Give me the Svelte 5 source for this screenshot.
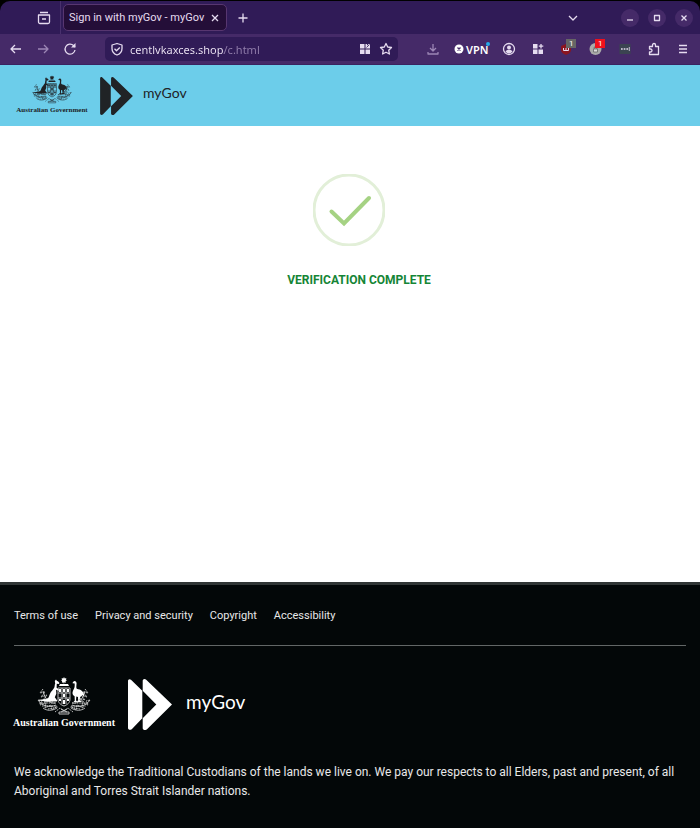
<script lang="ts">
  let address = 'centlvkaxces.shop/c.html';

  let links = ['Terms of use', 'Privacy and security', 'Copyright', 'Accessibility'];
</script>

{#snippet crest()}
  <svg class="crest" viewBox="0 0 54 38" aria-hidden="true">
    <g fill="none" stroke="currentColor" stroke-width="0.9" opacity="0.8">
      <path d="M19 26C12 27 8 22 6 14M19 28C12 31 5 29 1 23M20 31C15 34 10 34 6 31M35 26C42 27 46 22 48 14M35 28C42 31 49 29 53 23M34 31C39 34 44 34 48 31" />
      <path d="M6 12l-3 4 5-1-4 5 6-2-4 5 7-2-6 4 9-1M48 12l3 4-5-1 4 5-6-2 4 5-7-2 6 4-9-1" stroke-dasharray="2 0.7" />
      <path d="M1 23l4 1-2 4 6-2-1 5 6-3 1 5 5-4M53 23l-4 1 2 4-6-2 1 5-6-3-1 5-5-4" stroke-dasharray="2 0.7" />
      <path d="M2 26h17M35 26h17M5 29h15M34 29h15M11 32l10-2M43 32l-10-2M18 35l5-4 4 3 4-3 5 4" stroke-dasharray="1.6 0.8" />
      <path d="M21 11h12v11c0 4-3 6-6 7-3-1-6-3-6-7zM21 16h12M21 21h12M25 11v16M29 11v16" />
      <path d="M22 35h10v2H22zM24 32l6 3M30 32l-6 3" />
    </g>
    <path fill="currentColor" d="M27 0l.8 1.400 1.600-.5-.5 1.600L30 3.300l-1.400.8.3 1.700-1.500-.5L27 7l-.7-1.700-1.400.5.2-1.700L24 3.300l1.100-.8-.5-1.600 1.600.5z" />
    <path fill="currentColor" d="M22 9h10l-1-2h-8zM22 12h2v3h-2zM26 12h2v3h-2zM30 12h2v3h-2zM26 17h2v3h-2zM22 22h2v2h-2zM30 22h2v2h-2zM26 23h2v4h-2z" />
    <path fill="currentColor" d="M19 2.500l1 1.500 1 .3 1.500 1.700-.7 1-2-.2-.2 4 2.400 2-.4 1-2.500-1 .2 4-1.500 3.500 2.500 3.400-.6.8H9l-7-1v-.8l8-.7c2-1 2-3 3-5.200 1-2.400 3-3.900 4.200-6 .7-1.300.3-3 1-4.400L17.800 4z" />
    <path fill="currentColor" d="M36 5l1.300-1 1.600.6.7 1.500-.3 3.900c0 1.500.6 2.100 2 2.300 3.600.5 5.700 3 6 7l-1.800-1.200-2.200 1.800-.8 3.100 2 2H40l1.200-1.600-.2-3.400-1.700-.4-.3 3.800 1.500 1.600h-4l1.300-1.600-.2-4.100c-2.200-1.300-2.500-3.400-1.700-5.400.6-1.500 2-3 1.800-5.300L37.700 6.500l-2.200-.3z" />
  </svg>
{/snippet}

{#snippet brand()}
  <div class="government">
    {@render crest()}
    <span>Australian Government</span>
  </div>
  <svg class="arrows" viewBox="0 0 44 51" aria-hidden="true">
    <path fill="currentColor" d="M0 2C0 .3 1.600-.5 3 .8L14.300 11.800V39.200L4 49.900C2.500 51.500 0 51 0 49z" />
    <path fill="currentColor" d="M14.700 2c0-1.800 2-2.600 3.500-1.200L44 25.500 19 50.200c-1.600 1.500-4.300 1-4.300-1.200V39.200L28.300 25.500 14.700 11.800z" />
  </svg>
  <span class="name">myGov</span>
{/snippet}

<div class="window">
  <div class="tabs">
    <button class="recent" aria-label="Recent browsing">
      <svg viewBox="0 0 16 16"><path d="M4 2.500h8M2.500 5h11v7a1.500 1.500 0 0 1-1.500 1.500H4A1.500 1.500 0 0 1 2.500 12zM6 9h4" /></svg>
    </button>
    <div class="tab">
      <span>Sign in with myGov - myGov</span>
      <button class="close" aria-label="Close tab">
        <svg viewBox="0 0 8 8"><path d="M1 1l6 6M7 1L1 7" /></svg>
      </button>
    </div>
    <button class="icon" aria-label="New tab">
      <svg viewBox="0 0 16 16"><path d="M8 3.500v9M3.500 8h9" /></svg>
    </button>
    <button class="icon list" aria-label="List all tabs">
      <svg viewBox="0 0 16 16"><path d="M4 6l4 4 4-4" /></svg>
    </button>
    <div class="controls">
      <button aria-label="Minimise"><svg viewBox="0 0 8 8"><path d="M1 6h6" /></svg></button>
      <button aria-label="Maximise"><svg viewBox="0 0 8 8"><path d="M1.500 1.500h5v5h-5z" /></svg></button>
      <button aria-label="Close"><svg viewBox="0 0 8 8"><path d="M1.500 1.500l5 5M6.500 1.500l-5 5" /></svg></button>
    </div>
  </div>

  <div class="toolbar">
    <div class="nav">
      <button class="icon" aria-label="Back"><svg viewBox="0 0 16 16"><path d="M13 8H3M7 4L3 8l4 4" /></svg></button>
      <button class="icon dim" aria-label="Forward"><svg viewBox="0 0 16 16"><path d="M3 8h10M9 4l4 4-4 4" /></svg></button>
      <button class="icon" aria-label="Reload"><svg viewBox="0 0 16 16"><path d="M13 9A5 5 0 1 1 11.500 4.500L13 6" /><path d="M13.500 2v4.500H9z" fill="currentColor" stroke="none" /></svg></button>
    </div>
    <div class="address">
      <svg viewBox="0 0 16 16"><path d="M8 2.500l5 1.500v3.500c0 3.500-2.300 5.500-5 6.500-2.700-1-5-3-5-6.500V4zM5.500 7.800l2 2 3.300-3.300" /></svg>
      <input type="text" aria-label="Address" bind:value={address} />
      <button class="icon" aria-label="Open app">
        <svg viewBox="0 0 16 16"><path d="M3 3h4.500v4.500H3zM3 8.500h4.500V13H3zM8.500 8.500H13V13H8.500zM8.500 3h1.500v1.500L11.500 3H13v4.500H8.500z" fill="currentColor" stroke="none" /><path d="M9.500 6.500l3-3" stroke="#301b57" stroke-width="0.8" /></svg>
      </button>
      <button class="icon" aria-label="Bookmark">
        <svg viewBox="0 0 16 16"><path d="M8 2.500l1.700 3.500 3.800.5-2.800 2.700.7 3.800L8 11.200 4.600 13l.7-3.800L2.500 6.500 6.300 6z" /></svg>
      </button>
    </div>
    <div class="extensions">
      <button class="icon dim" aria-label="Downloads"><svg viewBox="0 0 16 16"><path d="M8 3v7M5 7l3 3 3-3M3 11v2h10v-2" /></svg></button>
      <button class="vpn">
        <svg viewBox="0 0 10 10"><circle cx="5" cy="5" r="4.500" fill="currentColor" stroke="none" /><path d="M3.500 3.500l3 3M6.500 3.500l-3 3" stroke="#452a68" /></svg>
        VPN
        <i></i>
      </button>
      <button class="icon" aria-label="Account"><svg viewBox="0 0 16 16"><circle cx="8" cy="8" r="5.500" /><circle cx="8" cy="6.500" r="2" fill="currentColor" stroke="none" /><path d="M4.500 10.500c1-2.500 6-2.500 7 0-2 2.500-5 2.500-7 0z" fill="currentColor" stroke="none" /></svg></button>
      <button class="icon" aria-label="Customise"><svg viewBox="0 0 16 16"><path d="M3 3h4.500v4.500H3zM3 8.500h4.500V13H3zM8.500 8.500H13V13H8.500z" fill="currentColor" stroke="none" /><path d="M11 3v4.500M8.800 5.200h4.500" /></svg></button>
      <button class="icon" aria-label="Content blocker">
        <svg viewBox="0 0 16 16"><path d="M7 3l5 2v4c0 2-2 4-5 5-3-1-5-3-5-5V5z" fill="#8b1520" stroke="none" /><path d="M4.500 7v2.500h5V7M7 7v2.500" stroke-width="1" /></svg>
        <b>1</b>
      </button>
      <button class="icon" aria-label="Privacy extension">
        <svg viewBox="0 0 16 16"><circle cx="7.500" cy="8" r="6" fill="#aaa" stroke="none" /><path d="M5.500 8h4v3h-4z" fill="#ddd" stroke="#666" stroke-width="0.8" /><path d="M6.200 8V6h2.600v2" stroke="#666" stroke-width="0.8" /></svg>
        <b class="alert">1</b>
      </button>
      <button class="icon" aria-label="Password manager"><svg viewBox="0 0 16 16"><path d="M2.500 3h11v10h-11z" fill="#3b4451" stroke="none" /><path d="M4 8h1.700M6.700 8h1.700M9.400 8h1.700" stroke-width="1.700" /><path d="M12.300 6v4" stroke-width="0.8" /></svg></button>
      <button class="icon" aria-label="Extensions"><svg viewBox="0 0 16 16"><path d="M3.500 5.500H6.500V4a1.500 1.500 0 0 1 3 0v1.500H12.500v8h-9v-2.500h1a1.500 1.500 0 0 0 0-3h-1z" /></svg></button>
      <button class="icon" aria-label="Menu"><svg viewBox="0 0 16 16"><path d="M4 4.500h8M4 8h8M4 11.500h8" /></svg></button>
    </div>
  </div>

  <header>
    {@render brand()}
  </header>

  <main>
    <svg class="tick" viewBox="0 0 72 72" aria-hidden="true">
      <circle cx="36" cy="36" r="35" />
      <path d="M18.500 37.500L31 49.500 56 24" />
    </svg>
    <h1>VERIFICATION COMPLETE</h1>
  </main>

  <footer>
    <nav>
      {#each links as link}
        <a href="#top">{link}</a>
      {/each}
    </nav>
    <div class="logo">
      {@render brand()}
    </div>
    <p>
      We acknowledge the Traditional Custodians of the lands we live on. We pay our respects to all
      Elders, past and present, of all Aboriginal and Torres Strait Islander nations.
    </p>
  </footer>
</div>

<style>
  :global(body) {
    margin: 0;
    background: #000;
  }

  .window {
    min-height: 100vh;
    display: flex;
    flex-direction: column;
    font-family: Roboto, sans-serif;
    background: #000;
  }

  button {
    padding: 0;
    border: 0;
    background: none;
    color: inherit;
    font: inherit;
    display: flex;
    align-items: center;
    justify-content: center;
  }

  .tabs,
  .toolbar {
    display: flex;
    align-items: center;
    box-sizing: border-box;
    color: #e6dcf0;
    font-family: 'Noto Sans', sans-serif;
    font-size: 11px;
  }

  .tabs svg,
  .toolbar svg {
    width: 16px;
    height: 16px;
    flex: none;
    fill: none;
    stroke: currentColor;
    stroke-width: 1.3;
    stroke-linejoin: round;
  }

  .tabs {
    height: 33px;
    margin-top: 1px;
    padding-right: 7px;
    background: #301b57;
    border-radius: 10px 10px 0 0;
  }

  .recent {
    width: 61px;
    height: 33px;
    padding-left: 27px;
    box-sizing: border-box;
    border-right: 1px solid #48306d;
  }

  .tab {
    display: flex;
    align-items: center;
    justify-content: space-between;
    box-sizing: border-box;
    width: 164px;
    height: 27px;
    margin: 0 8px 0 2px;
    padding: 0 6px 0 5px;
    border: 1px solid #573670;
    border-radius: 5px;
    background: #240e38;
    font-family: Roboto, sans-serif;
    white-space: nowrap;
  }

  .tabs .close svg,
  .controls svg {
    width: 8px;
    height: 8px;
  }

  .close {
    width: 10px;
    height: 16px;
  }

  .icon {
    position: relative;
    width: 16px;
    height: 20px;
    flex: none;
  }

  .list {
    margin-left: auto;
    margin-right: 40px;
  }

  .controls {
    display: flex;
    gap: 9px;
  }

  .controls button {
    width: 18px;
    height: 18px;
    border-radius: 50%;
    background: #452a68;
  }

  .toolbar {
    height: 31px;
    padding: 0 9px 0 8px;
    background: #452a68;
    border-bottom: 1px solid #3a2360;
  }

  .nav {
    display: flex;
    gap: 11px;
    margin-right: 27px;
  }

  .dim {
    color: #9c86b5;
  }

  .address {
    display: flex;
    align-items: center;
    gap: 5px;
    flex: 1;
    min-width: 120px;
    height: 24px;
    padding: 0 4px;
    border-radius: 5px;
    background: #301b57;
  }

  .address input {
    flex: 1;
    min-width: 0;
    padding: 0;
    border: 0;
    outline: 0;
    color: #e6dcf0;
    font: 11px 'Noto Sans', sans-serif;
    background: linear-gradient(90deg, #f0e8f7 94px, #9380ad 94px);
    background-clip: text;
    -webkit-text-fill-color: transparent;
  }

  .extensions {
    display: flex;
    align-items: center;
    justify-content: space-between;
    flex: 0 1 266px;
    margin-left: 27px;
  }

  .vpn {
    position: relative;
    gap: 2px;
    color: #fff;
    font-weight: 600;
  }

  .vpn svg {
    width: 10px;
    height: 10px;
  }

  .vpn i {
    position: absolute;
    top: 0;
    right: -2px;
    width: 4px;
    height: 4px;
    border-radius: 50%;
    background: #24a9e8;
  }

  .icon b {
    position: absolute;
    top: 0;
    right: -1px;
    width: 10px;
    height: 9px;
    background: #666;
    color: #fff;
    font: 8px/9px Roboto, sans-serif;
  }

  .icon .alert {
    background: #f0101c;
  }

  header,
  .logo {
    display: flex;
    align-items: center;
  }

  header {
    height: 61px;
    padding: 0 14px;
    background: #6ccdea;
    color: #202326;
  }

  .government {
    display: flex;
    flex-direction: column;
    align-items: center;
    font-family: 'Liberation Serif', serif;
    font-weight: bold;
    white-space: nowrap;
  }

  header .government {
    width: 76px;
    font-size: 7px;
    line-height: 12px;
  }

  header .crest {
    width: 40px;
    height: 29px;
  }

  header .arrows {
    width: 33px;
    height: 38px;
    margin: 0 10px;
  }

  .name {
    padding-bottom: 6px;
    font-family: Lato, sans-serif;
  }

  header .name {
    font-size: 14px;
  }

  main {
    flex: 1;
    display: flex;
    flex-direction: column;
    align-items: center;
    padding: 48px 2px 0 0;
    background: #fff;
  }

  .tick {
    width: 72px;
    height: 72px;
    fill: none;
    stroke: #a5d283;
    stroke-width: 4;
    stroke-linecap: round;
  }

  .tick circle {
    stroke: #e2efd8;
    stroke-width: 3;
  }

  h1 {
    margin: 26px 0 0;
    padding-left: 20px;
    color: #158536;
    font-size: 12px;
    line-height: 16px;
  }

  footer {
    padding: 21px 14px 27px;
    border-top: 3px solid #303535;
    background: #030708;
    color: #e8e8e8;
  }

  nav {
    display: flex;
    gap: 17px;
    padding-bottom: 19px;
    border-bottom: 1px solid #626666;
    font-size: 11px;
    line-height: 20px;
  }

  nav a {
    color: inherit;
    text-decoration: none;
  }

  .logo {
    padding: 31px 0 32px;
    color: #fff;
  }

  .logo .government {
    width: 100px;
    font-size: 10px;
    line-height: 16px;
  }

  .logo .crest {
    width: 54px;
    height: 38px;
  }

  .logo .arrows {
    width: 44px;
    height: 51px;
    margin: 0 14px;
  }

  .logo .name {
    font-size: 19px;
  }

  footer p {
    margin: 0;
    font-size: 12px;
    line-height: 19px;
  }
</style>
